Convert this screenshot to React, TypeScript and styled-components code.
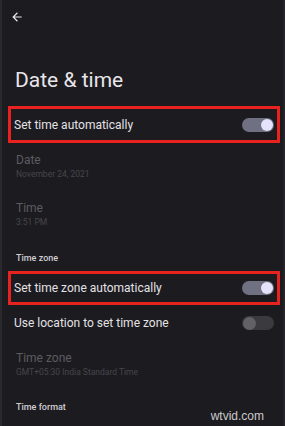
import styled, { createGlobalStyle } from "styled-components";

const GlobalStyle = createGlobalStyle`
    html, body {
        margin: 0;
        padding: 0;
        background: #1c1b1f;
    }
    body {
        font-family: Roboto, "Noto Sans", "Liberation Sans", sans-serif;
    }
`

const BackArrow = () => (
    <svg width="14" height="14" viewBox="0 0 24 24" fill="#e8e6ea">
        <path d="M20 11H7.83l5.59-5.59L12 4l-8 8 8 8 1.41-1.41L7.83 13H20v-2z" />
    </svg>
)

type ToggleProps = { on?: boolean }

const Toggle = ({ on }: ToggleProps) => (
    <Track $on={on}>
        <Thumb $on={on} />
    </Track>
)

export default function App() {
    return (
        <>
            <GlobalStyle />
            <Screen>
                <Header>
                    <BackArrow />
                </Header>
                <Title>Date &amp; time</Title>

                <Row $highlight $height={37}>
                    <RowLabel>Set time automatically</RowLabel>
                    <Toggle on />
                </Row>

                <Item>
                    <ItemTitle>Date</ItemTitle>
                    <ItemSub>November 24, 2021</ItemSub>
                </Item>
                <Item>
                    <ItemTitle>Time</ItemTitle>
                    <ItemSub>3:51 PM</ItemSub>
                </Item>

                <SectionHeader $top={13} $bottom={7}>Time zone</SectionHeader>

                <Row $highlight $height={34}>
                    <RowLabel>Set time zone automatically</RowLabel>
                    <Toggle on />
                </Row>
                <Row $height={36}>
                    <RowLabel>Use location to set time zone</RowLabel>
                    <Toggle />
                </Row>

                <Item>
                    <ItemTitle>Time zone</ItemTitle>
                    <ItemSub>GMT+05:30 India Standard Time</ItemSub>
                </Item>

                <SectionHeader $top={12} $bottom={0}>Time format</SectionHeader>

                <Watermark>wtvid.com</Watermark>
            </Screen>
        </>
    )
}

const Screen = styled.div`
    position: relative;
    box-sizing: border-box;
    width: 285px;
    height: 426px;
    overflow: hidden;
    background: #1c1b1f;
    border-left: 2px solid #2a292e;
    border-right: 2px solid #25242a;
    display: flex;
    flex-direction: column;
`

const Header = styled.div`
    height: 34px;
    display: flex;
    align-items: center;
    padding-left: 8px;
`

const Title = styled.h1`
    margin: 33px 0 13px 13px;
    font-size: 21px;
    line-height: 26px;
    font-weight: 400;
    color: #e8e5ea;
`

const Row = styled.div<{ $highlight?: boolean; $height: number }>`
    box-sizing: border-box;
    height: ${p => p.$height}px;
    margin: 0 3px 0 6px;
    padding: 0 3px 0 3px;
    border: 3px solid ${p => (p.$highlight ? "#e8231f" : "transparent")};
    display: flex;
    align-items: center;
    justify-content: space-between;
`

const RowLabel = styled.span`
    font-size: 12px;
    color: #e4e2e6;
`

const Track = styled.div<{ $on?: boolean }>`
    box-sizing: border-box;
    width: 32px;
    height: 14px;
    border-radius: 7px;
    background: ${p => (p.$on ? "#6f7082" : "#3b3a3f")};
    display: flex;
    align-items: center;
    justify-content: ${p => (p.$on ? "flex-end" : "flex-start")};
    padding: 0 1px;
`

const Thumb = styled.div<{ $on?: boolean }>`
    width: ${p => (p.$on ? 12 : 13)}px;
    height: ${p => (p.$on ? 12 : 13)}px;
    border-radius: 50%;
    background: ${p => (p.$on ? "#e4e3fb" : "#626166")};
`

const Item = styled.div`
    padding: 9px 0 11px 14px;
    display: flex;
    flex-direction: column;
`

const ItemTitle = styled.span`
    font-size: 12px;
    line-height: 16px;
    color: #5c5b61;
`

const ItemSub = styled.span`
    font-size: 8.5px;
    line-height: 12px;
    color: #47464c;
`

const SectionHeader = styled.div<{ $top: number; $bottom: number }>`
    margin: ${p => p.$top}px 0 ${p => p.$bottom}px 14px;
    font-size: 9px;
    line-height: 12px;
    font-weight: 500;
    color: #cfcdd2;
`

const Watermark = styled.span`
    position: absolute;
    right: 19px;
    bottom: 3px;
    font-family: "Liberation Sans", Arial, sans-serif;
    font-size: 12px;
    color: rgba(235, 235, 235, 0.85);
`
